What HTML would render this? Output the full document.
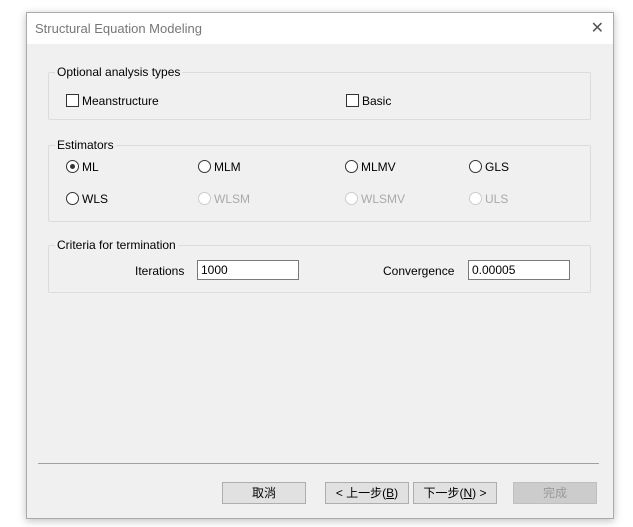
<!DOCTYPE html><html><head><style>
body{margin:0;width:633px;height:527px;background:#fff;position:relative;font-family:"Liberation Sans","Noto Sans CJK TC",sans-serif;font-size:12px;color:#000;overflow:hidden}
.win{position:absolute;left:26px;top:12px;width:586px;height:505px;background:#f0f0f0;border:1px solid #aaa;box-shadow:0 2px 8px rgba(0,0,0,.25)}
.title{position:absolute;left:0;top:0;width:586px;height:31px;background:#fff;color:#777;font-size:13px}
.tt{position:absolute;left:8px;top:8px}
.x{position:absolute;right:9px;top:5px;font-size:16px;color:#555}
.g{position:absolute;border:1px solid #dcdcdc;border-radius:2px}
.lg{position:absolute;top:-8px;left:6px;background:#f0f0f0;padding:0 2px;font-size:12px}
.a{position:absolute;white-space:nowrap}
.cb{display:inline-block;width:11px;height:11px;border:1px solid #333;background:#fff;vertical-align:-2px;margin-right:3px}
.rb{display:inline-block;width:11px;height:11px;border:1px solid #333;border-radius:50%;background:#fff;vertical-align:-2px;margin-right:3px;position:relative}
.rb.on::after{content:"";position:absolute;left:3px;top:3px;width:5px;height:5px;border-radius:50%;background:#333}
.dis{color:#aaa}.dis .rb{border-color:#ccc}
.in{position:absolute;height:20px;border:1px solid #7a7a7a;background:#fff;box-sizing:border-box;padding:2px 3px;font-size:12px}
.btn{position:absolute;top:469px;width:84px;height:22px;border:1px solid #adadad;background:#e1e1e1;box-sizing:border-box;text-align:center;line-height:20px;font-size:12px}
</style></head><body>
<div class="win">
<div class="title"><span class="tt">Structural Equation Modeling</span><span class="x">✕</span></div>
<div class="g" style="left:21px;top:59px;width:541px;height:46px"><div class="lg">Optional analysis types</div>
<div class="a" style="left:17px;top:21px"><span class="cb"></span>Meanstructure</div>
<div class="a" style="left:297px;top:21px"><span class="cb"></span>Basic</div></div>
<div class="g" style="left:21px;top:132px;width:541px;height:75px"><div class="lg">Estimators</div>
<div class="a" style="left:17px;top:14px"><span class="rb on"></span>ML</div>
<div class="a" style="left:149px;top:14px"><span class="rb"></span>MLM</div>
<div class="a" style="left:296px;top:14px"><span class="rb"></span>MLMV</div>
<div class="a" style="left:420px;top:14px"><span class="rb"></span>GLS</div>
<div class="a" style="left:17px;top:46px"><span class="rb"></span>WLS</div>
<div class="a dis" style="left:149px;top:46px"><span class="rb"></span>WLSM</div>
<div class="a dis" style="left:296px;top:46px"><span class="rb"></span>WLSMV</div>
<div class="a dis" style="left:420px;top:46px"><span class="rb"></span>ULS</div></div>
<div class="g" style="left:21px;top:232px;width:541px;height:46px"><div class="lg">Criteria for termination</div>
<div class="a" style="left:86px;top:18px">Iterations</div>
<div class="in" style="left:148px;top:14px;width:102px">1000</div>
<div class="a" style="left:334px;top:18px">Convergence</div>
<div class="in" style="left:419px;top:14px;width:102px">0.00005</div></div>
<div style="position:absolute;left:11px;top:450px;width:561px;height:1px;background:#a0a0a0"></div>
<div class="btn" style="left:195px">取消</div>
<div class="btn" style="left:298px">&lt; 上一步(<u>B</u>)</div>
<div class="btn" style="left:386px">下一步(<u>N</u>) &gt;</div>
<div class="btn" style="left:486px;background:#ccc;border-color:#bfbfbf;color:#999">完成</div>
</div>
</body></html>
